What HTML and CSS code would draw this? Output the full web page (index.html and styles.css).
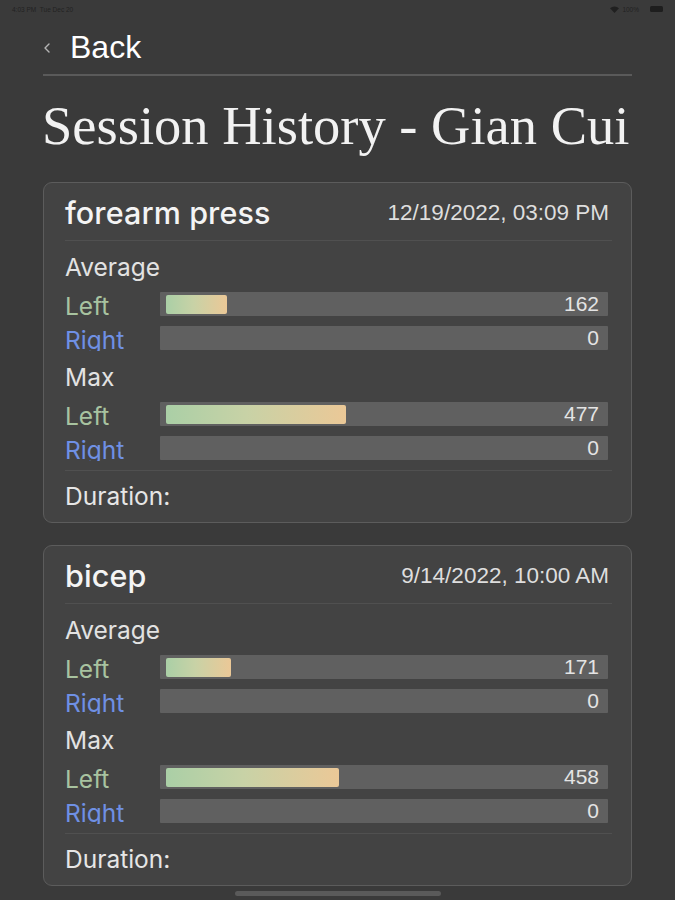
FILE: index.html
```html
<!DOCTYPE html>
<html lang="en">
<head>
<meta charset="utf-8">
<title>Session History</title>
<link rel="stylesheet" href="styles.css">
</head>
<body>
<div class="status">
  <div class="status-left">4:03 PM&nbsp;&nbsp;Tue Dec 20</div>
  <div class="status-right">
    <svg class="wifi" width="9" height="7" viewBox="0 0 9 7"><path d="M0 2.2 A6.5 6.5 0 0 1 9 2.2 L4.5 7 Z" fill="#202020"/></svg>
    <span>100%</span>
    <span class="battery"></span>
  </div>
</div>
<main class="page">
  <nav class="nav">
    <svg class="chev" width="8" height="12" viewBox="0 0 8 12"><polyline points="6,2 2,6 6,10" fill="none" stroke="#b5b5b5" stroke-width="1.4" stroke-linecap="round" stroke-linejoin="round"/></svg>
    <span class="back">Back</span>
  </nav>
  <h1 class="title">Session History - Gian Cui</h1>

  <section class="card">
    <div class="card-head">
      <span class="card-name">forearm press</span>
      <span class="card-date">12/19/2022, 03:09 PM</span>
    </div>
    <div class="section-label">Average</div>
    <div class="row">
      <span class="side left">Left</span>
      <div class="track"><div class="fill" style="width:14.15%"></div><span class="val">162</span></div>
    </div>
    <div class="row">
      <span class="side right">Right</span>
      <div class="track"><span class="val">0</span></div>
    </div>
    <div class="section-label max">Max</div>
    <div class="row">
      <span class="side left">Left</span>
      <div class="track"><div class="fill" style="width:41.66%"></div><span class="val">477</span></div>
    </div>
    <div class="row">
      <span class="side right">Right</span>
      <div class="track"><span class="val">0</span></div>
    </div>
    <div class="duration">Duration:</div>
  </section>

  <section class="card">
    <div class="card-head">
      <span class="card-name">bicep</span>
      <span class="card-date">9/14/2022, 10:00 AM</span>
    </div>
    <div class="section-label">Average</div>
    <div class="row">
      <span class="side left">Left</span>
      <div class="track"><div class="fill" style="width:14.93%"></div><span class="val">171</span></div>
    </div>
    <div class="row">
      <span class="side right">Right</span>
      <div class="track"><span class="val">0</span></div>
    </div>
    <div class="section-label max">Max</div>
    <div class="row">
      <span class="side left">Left</span>
      <div class="track"><div class="fill" style="width:40%"></div><span class="val">458</span></div>
    </div>
    <div class="row">
      <span class="side right">Right</span>
      <div class="track"><span class="val">0</span></div>
    </div>
    <div class="duration">Duration:</div>
  </section>
</main>
<div class="home-bar"></div>
</body>
</html>
```
FILE: styles.css
```css
* { box-sizing: border-box; }
html, body {
  margin: 0;
  padding: 0;
  background: #3a3a3a;
  width: 675px;
  height: 900px;
  overflow: hidden;
}
body {
  font-family: Inter, "Liberation Sans", sans-serif;
  color: #e6e6e6;
  position: relative;
}
.status {
  height: 18px;
  display: flex;
  justify-content: space-between;
  align-items: center;
  padding: 0 12px 0 12px;
  font-family: "Liberation Sans", Arial, sans-serif;
  font-size: 6.5px;
  color: #222;
}
.status-right {
  display: flex;
  align-items: center;
  gap: 3px;
}
.battery {
  display: inline-block;
  width: 13px;
  height: 6px;
  border-radius: 1.5px;
  background: #1e1e1e;
  margin-left: 8px;
}
.page {
  padding: 0 43px;
}
.nav {
  height: 58px;
  display: flex;
  align-items: flex-start;
  padding-top: 11px;
  border-bottom: 2px solid #5a5a5a;
}
.chev {
  margin: 13px 0 0 0;
}
.back {
  font-family: "Liberation Sans", Arial, sans-serif;
  font-size: 32px;
  color: #ffffff;
  margin-left: 19px;
  line-height: 37px;
}
.title {
  font-family: "Liberation Serif", "Times New Roman", serif;
  font-weight: normal;
  font-size: 54.5px;
  line-height: 60px;
  color: #f2f2f2;
  margin: 20px 0 26px -1px;
  white-space: nowrap;
}
.card {
  background: #434343;
  border: 1px solid #5c5c5c;
  border-radius: 9px;
  padding: 0 22px 0 21px;
  margin-bottom: 22px;
  height: 341px;
}
.card-head {
  height: 58px;
  display: flex;
  justify-content: space-between;
  align-items: center;
  border-bottom: 1px solid #505050;
  margin-right: -3px;
  padding-right: 3px;
  padding-top: 2px;
}
.card-name {
  font-size: 30.5px;
  font-weight: 500;
  color: #f4f4f4;
  letter-spacing: 0.1px;
}
.card-date {
  font-family: "Liberation Sans", Arial, sans-serif;
  font-size: 22.5px;
  color: #dedede;
  padding-top: 1px;
}
.section-label {
  font-size: 24.5px;
  line-height: 34px;
  height: 34px;
  margin-top: 9px;
  color: #e2e2e2;
}
.section-label.max {
  margin-top: 5px;
}
.row {
  display: flex;
  align-items: center;
  height: 34px;
  margin-top: 3px;
}
.row + .row {
  margin-top: 0;
}
.side {
  width: 95px;
  flex: none;
  height: 26px;
  overflow: hidden;
  font-size: 24.5px;
  line-height: 31px;
}
.side.left { color: #a8c3a0; }
.side.right { color: #6f90e4; }
.track {
  flex: 1;
  height: 24px;
  background: #606060;
  border-radius: 1px;
  display: flex;
  align-items: center;
  padding: 0 9px 0 6px;
  margin-right: 1px;
}
.fill {
  height: 19px;
  border-radius: 2px;
  background: linear-gradient(90deg, #aacfa6 0%, #c8d2a6 45%, #ebc897 100%);
}
.val {
  margin-left: auto;
  font-family: "Liberation Sans", Arial, sans-serif;
  font-size: 21px;
  color: #e4e4e4;
}
.duration {
  margin-top: 5px;
  border-top: 1px solid #505050;
  height: 51px;
  display: flex;
  align-items: center;
  font-size: 24.5px;
  color: #e6e6e6;
  margin-right: -3px;
}
.home-bar {
  position: absolute;
  left: 235px;
  top: 891px;
  width: 206px;
  height: 5px;
  border-radius: 3px;
  background: #5a5a5a;
}
```
